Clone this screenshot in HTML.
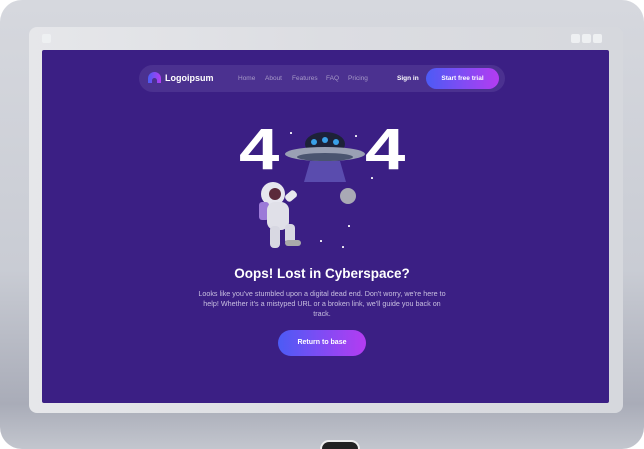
<!DOCTYPE html>
<html style="margin:0;width:644px;height:449px;overflow:hidden"><head><style>
body{margin:0;width:644px;height:449px;background:#fff;position:relative;overflow:hidden;font-family:"Liberation Sans",sans-serif}
.dev{position:absolute;left:0;top:0;width:644px;height:449px;overflow:hidden;border-radius:22px;background:linear-gradient(180deg,#d6d8de 0%,#c9ccd4 60%,#a9acb8 90%,#c3c6ce 100%)}
.bez{position:absolute;left:29px;top:27px;width:594px;height:386px;border-radius:8px;background:linear-gradient(90deg,#e6e7ea,#dcdde2 50%,#d6d8dd);}
.scr{position:absolute;left:42px;top:50px;width:567px;height:353px;background:#3b1f84;border-radius:2px}
.sq{position:absolute;top:34px;width:9px;height:9px;background:#eef0f2;border-radius:2px}
.nav{position:absolute;left:139px;top:65px;width:366px;height:27px;border-radius:14px;background:#4b3190}
.t{position:absolute;color:#fff;white-space:nowrap}
.btn{position:absolute;border-radius:14px;background:linear-gradient(90deg,#4c5bf5,#b43cf2);color:#fff;font-weight:bold;text-align:center}
.n{position:absolute;top:75px;font-size:6.5px;color:#a79ac8}
.star{position:absolute;width:1.5px;height:1.5px;background:#fff;border-radius:50%}
.four{position:absolute;color:#fff;font-size:58px;font-weight:bold;line-height:58px;transform:scaleX(1.25);transform-origin:left top}
</style></head><body>
<div class="dev"></div>
<div style="position:absolute;left:320px;top:440px;width:36px;height:7px;border-radius:20px 20px 0 0;background:#222;border:2px solid #eee;border-bottom:0"></div>
<div class="bez"></div>
<div class="sq" style="left:42px"></div>
<div class="sq" style="left:571px"></div><div class="sq" style="left:582px"></div><div class="sq" style="left:593px"></div>
<div class="scr"></div>
<div class="nav"></div>
<div style="position:absolute;left:148px;top:72px;width:13px;height:11px;border-radius:7px 7px 0 0;background:linear-gradient(90deg,#4c5bf5,#b43cf2)"></div>
<div style="position:absolute;left:152px;top:78px;width:5px;height:5px;border-radius:3px 3px 0 0;background:#4b3190"></div>
<div class="t" style="left:165px;top:73px;font-size:9px;font-weight:bold">Logoipsum</div>
<div class="n" style="left:238px">Home</div>
<div class="n" style="left:265px">About</div>
<div class="n" style="left:292px">Features</div>
<div class="n" style="left:326px">FAQ</div>
<div class="n" style="left:348px">Pricing</div>
<div class="t" style="left:397px;top:75px;font-size:6.5px;font-weight:bold">Sign in</div>
<div class="btn" style="left:426px;top:68px;width:73px;height:21px;line-height:21px;font-size:6.5px;border-radius:11px">Start free trial</div>
<div class="four" style="left:239px;top:121px">4</div>
<div class="four" style="left:365px;top:121px">4</div>
<svg style="position:absolute;left:280px;top:130px" width="90" height="60">
<ellipse cx="45" cy="14" rx="20" ry="12" fill="#1d2238"/>
<ellipse cx="45" cy="24" rx="40" ry="7" fill="#9aa0b4"/>
<ellipse cx="45" cy="27" rx="28" ry="4" fill="#4a5470"/>
<circle cx="34" cy="12" r="3" fill="#3aa0e8"/><circle cx="45" cy="10" r="3" fill="#3aa0e8"/><circle cx="56" cy="12" r="3" fill="#3aa0e8"/>
<polygon points="30,31 60,31 66,52 24,52" fill="#7a7ad8" opacity=".5"/>
</svg>
<svg style="position:absolute;left:255px;top:180px" width="60" height="75">
<circle cx="18" cy="14" r="12" fill="#e6e6ee"/><circle cx="20" cy="14" r="6" fill="#5b2a3a"/>
<rect x="4" y="22" width="10" height="18" rx="3" fill="#9c7ad8"/>
<rect x="12" y="22" width="22" height="28" rx="8" fill="#e0e0e8"/>
<rect x="30" y="12" width="12" height="8" rx="3" fill="#e8e8ee" transform="rotate(-40 36 16)"/>
<rect x="15" y="46" width="10" height="22" rx="4" fill="#d8d8e2"/>
<rect x="30" y="44" width="10" height="20" rx="4" fill="#d8d8e2"/>
<rect x="30" y="60" width="16" height="6" rx="3" fill="#aaa"/>
</svg>
<svg style="position:absolute;left:339px;top:187px" width="18" height="18"><circle cx="9" cy="9" r="8" fill="#a9a9b5"/></svg>
<div class="star" style="left:290px;top:132px"></div><div class="star" style="left:355px;top:135px"></div><div class="star" style="left:371px;top:177px"></div><div class="star" style="left:348px;top:225px"></div><div class="star" style="left:342px;top:246px"></div><div class="star" style="left:320px;top:240px"></div>
<div class="t" style="left:0;width:644px;text-align:center;top:266px;font-size:13.5px;font-weight:bold">Oops! Lost in Cyberspace?</div>
<div class="t" style="left:197px;width:250px;text-align:center;top:289px;font-size:7.2px;line-height:10px;color:#c8bfe0;white-space:normal">Looks like you've stumbled upon a digital dead end. Don't worry, we're here to help! Whether it's a mistyped URL or a broken link, we'll guide you back on track.</div>
<div class="btn" style="left:278px;top:330px;width:88px;height:26px;line-height:26px;font-size:7px;border-radius:13px">Return to base</div>
</body></html>
